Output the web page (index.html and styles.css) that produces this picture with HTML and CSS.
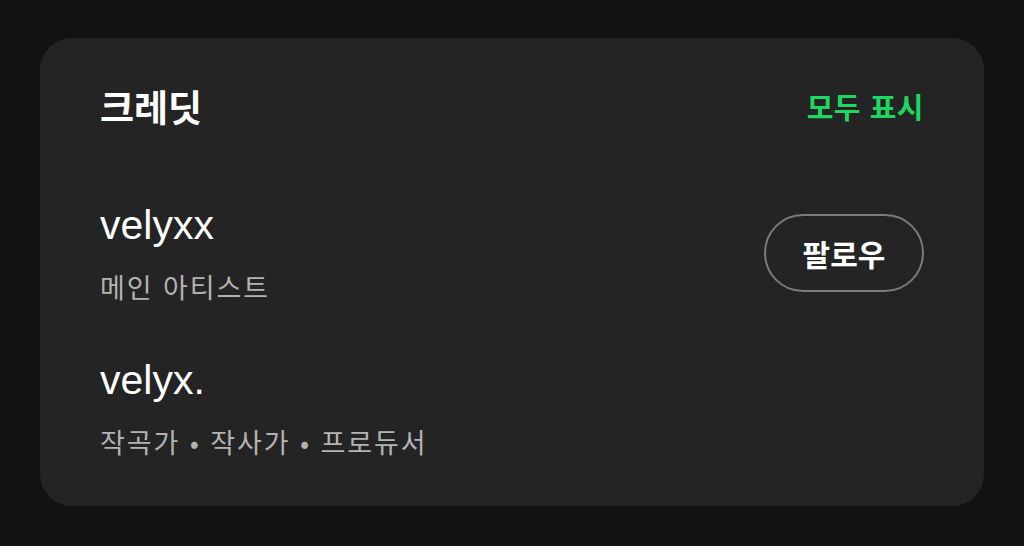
FILE: index.html
```html
<!DOCTYPE html>
<html lang="ko">
<head>
<meta charset="utf-8">
<title>크레딧</title>
<link rel="stylesheet" href="styles.css">
</head>
<body>
  <section class="credits">
    <header class="credits-head">
      <h2 class="credits-title">크레딧</h2>
      <a class="show-all" href="#">모두 표시</a>
    </header>
    <ul class="credit-list">
      <li class="credit">
        <div class="credit-info">
          <div class="credit-name">velyxx</div>
          <div class="credit-role">메인 아티스트</div>
        </div>
        <button class="follow-btn">팔로우</button>
      </li>
      <li class="credit">
        <div class="credit-info">
          <div class="credit-name">velyx.</div>
          <div class="credit-role">작곡가 • 작사가 • 프로듀서</div>
        </div>
      </li>
    </ul>
  </section>
</body>
</html>
```
FILE: styles.css
```css
html, body {
  margin: 0;
  padding: 0;
  background: #121212;
}

body {
  width: 1024px;
  height: 546px;
  padding: 38px 40px 0;
  box-sizing: border-box;
  font-family: "Noto Sans CJK KR", "Noto Sans", sans-serif;
  color: #fff;
}

.credits {
  width: 944px;
  height: 468px;
  box-sizing: border-box;
  background: #242424;
  border-radius: 32px;
  padding: 44px 60px 0;
}

.credits-head {
  display: flex;
  justify-content: space-between;
  align-items: center;
  height: 48px;
}

.credits-title {
  margin: 0;
  font-size: 37px;
  font-weight: 700;
  line-height: 48px;
}

.show-all {
  color: #1ed760;
  font-size: 29px;
  font-weight: 700;
  letter-spacing: 0.5px;
  text-decoration: none;
  line-height: 48px;
}

.credit-list {
  list-style: none;
  margin: 71px 0 0;
  padding: 0;
  display: flex;
  flex-direction: column;
  gap: 52px;
}

.credit {
  display: flex;
  justify-content: space-between;
  align-items: center;
}

.credit-info {
  display: flex;
  flex-direction: column;
  gap: 21px;
}

.credit-name {
  font-family: "Liberation Sans", Arial, sans-serif;
  font-size: 41px;
  line-height: 48px;
}

.credit-role {
  font-size: 27px;
  line-height: 34px;
  color: #b3b3b3;
  letter-spacing: 1.9px;
}

.follow-btn {
  width: 160px;
  height: 78px;
  border: 2px solid #7c7c7c;
  border-radius: 40px;
  background: transparent;
  color: #fff;
  font-family: "Noto Sans CJK KR", sans-serif;
  font-size: 30px;
  font-weight: 700;
  padding: 0;
}
```
